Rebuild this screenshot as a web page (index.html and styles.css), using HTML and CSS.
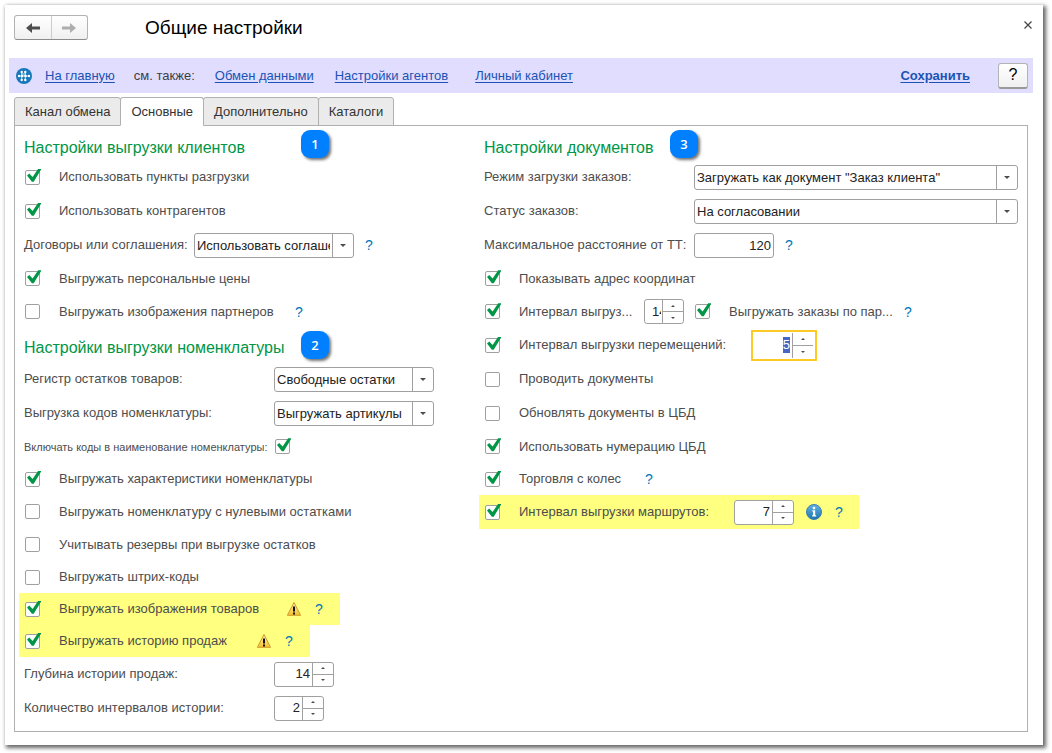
FILE: index.html
```html
<!DOCTYPE html>
<html lang="ru">
<head>
<meta charset="utf-8">
<title>Общие настройки</title>
<link rel="stylesheet" href="styles.css">
</head>
<body>
<svg class="sprite" aria-hidden="true">
  <defs>
    <linearGradient id="warn-fill" x1="0" y1="0" x2="0" y2="1"><stop offset="0" stop-color="#fff3a8"/><stop offset="1" stop-color="#f7c02f"/></linearGradient>
    <linearGradient id="info-fill" x1="0" y1="0" x2="0" y2="1"><stop offset="0" stop-color="#62b3e6"/><stop offset="1" stop-color="#1d74ad"/></linearGradient>
  </defs>
  <symbol id="warn" viewBox="0 0 16 16"><path d="M8 1.5 14.6 14.3H1.4Z" fill="url(#warn-fill)" stroke="#cf9a2c" stroke-width="1" stroke-linejoin="round"/><path d="M7 5.5h2v5H7zM7 11.5h2v2H7z" fill="#111"/></symbol>
</svg>
<main class="window">
  <header class="titlebar">
    <div class="history">
      <button class="history-btn" type="button" aria-label="Назад"><svg width="14" height="12" viewBox="0 0 14 12"><path d="M0 6 6 1v3.5h8v3H6V11Z" fill="#4d4d4d"/></svg></button>
      <button class="history-btn" type="button" aria-label="Вперед"><svg width="14" height="12" viewBox="0 0 14 12"><path d="M14 6 8 1v3.5H0v3h8V11Z" fill="#adadad"/></svg></button>
    </div>
    <h1 class="title">Общие настройки</h1>
    <button class="close" type="button" aria-label="Закрыть"><svg width="8" height="8" viewBox="0 0 8 8"><path d="M.5.5l7 7M7.5.5l-7 7" stroke="#444" stroke-width="1.2"/></svg></button>
  </header>

  <nav class="linkbar">
    <svg class="home" width="16" height="16" viewBox="0 0 16 16"><circle cx="8" cy="8" r="8" fill="#1878bb"/><path d="M5.7 4v8M9.3 4v8M3 8h10M5.7 6h3.6" stroke="#b9def2" stroke-width="1"/><g fill="#fff"><circle cx="5.7" cy="4" r="1.2"/><circle cx="9.3" cy="4" r="1.2"/><circle cx="3" cy="8" r="1.2"/><circle cx="6" cy="8" r="1.3"/><circle cx="9.5" cy="8" r="1.3"/><circle cx="13" cy="8" r="1.2"/><circle cx="5.7" cy="12" r="1.2"/><circle cx="9.3" cy="12" r="1.2"/></g></svg>
    <a class="link" href="#">На главную</a>
    <span class="see-also">см. также:</span>
    <a class="link link-exchange" href="#">Обмен данными</a>
    <a class="link link-agents" href="#">Настройки агентов</a>
    <a class="link" href="#">Личный кабинет</a>
    <a class="link save" href="#">Сохранить</a>
    <button class="help-btn" type="button">?</button>
  </nav>

  <div class="tabs" role="tablist">
    <button class="tab" type="button" role="tab">Канал обмена</button>
    <button class="tab tab-active" type="button" role="tab" aria-selected="true">Основные</button>
    <button class="tab" type="button" role="tab">Дополнительно</button>
    <button class="tab" type="button" role="tab">Каталоги</button>
  </div>

  <div class="panel">
    <div class="column">
      <h2 class="heading">Настройки выгрузки клиентов<span class="callout">1</span></h2>
      <div class="row"><input class="check" type="checkbox" id="points" checked><label for="points">Использовать пункты разгрузки</label></div>
      <div class="row"><input class="check" type="checkbox" id="contractors" checked><label for="contractors">Использовать контрагентов</label></div>
      <div class="row">
        <label class="label-contract" for="contract">Договоры или соглашения:</label>
        <span class="combo"><select id="contract"><option>Использовать соглашения</option></select></span>
        <button class="hint hint-near" type="button">?</button>
      </div>
      <div class="row row-mid"><input class="check" type="checkbox" id="prices" checked><label for="prices">Выгружать персональные цены</label></div>
      <div class="row row-mid"><input class="check" type="checkbox" id="partner-img"><label class="label-partner" for="partner-img">Выгружать изображения партнеров</label><button class="hint" type="button">?</button></div>

      <h2 class="heading heading-next">Настройки выгрузки номенклатуры<span class="callout">2</span></h2>
      <div class="row"><label class="label-wide" for="register">Регистр остатков товаров:</label><span class="combo"><select id="register"><option>Свободные остатки</option></select></span></div>
      <div class="row"><label class="label-wide" for="codes">Выгрузка кодов номенклатуры:</label><span class="combo"><select id="codes"><option>Выгружать артикулы</option></select></span></div>
      <div class="row row-mid"><label class="label-wide label-small" for="in-name">Включать коды в наименование номенклатуры:</label><input class="check" type="checkbox" id="in-name" checked></div>
      <div class="row row-low"><input class="check" type="checkbox" id="chars" checked><label for="chars">Выгружать характеристики номенклатуры</label></div>
      <div class="row row-mid"><input class="check" type="checkbox" id="zero"><label for="zero">Выгружать номенклатуру с нулевыми остатками</label></div>
      <div class="row row-mid"><input class="check" type="checkbox" id="reserve"><label for="reserve">Учитывать резервы при выгрузке остатков</label></div>
      <div class="row row-low"><input class="check" type="checkbox" id="barcode"><label for="barcode">Выгружать штрих-коды</label></div>
      <div class="row row-low marked marked-images"><input class="check" type="checkbox" id="goods-img" checked><label class="label-images" for="goods-img">Выгружать изображения товаров</label><svg class="sign" width="16" height="16"><use href="#warn"/></svg><button class="hint" type="button">?</button></div>
      <div class="row row-low marked marked-history"><input class="check" type="checkbox" id="history" checked><label class="label-history" for="history">Выгружать историю продаж</label><svg class="sign" width="16" height="16"><use href="#warn"/></svg><button class="hint" type="button">?</button></div>
      <div class="row"><label class="label-wide" for="depth">Глубина истории продаж:</label><span class="spin"><input type="text" inputmode="numeric" id="depth" value="14"><span class="steps"><button type="button" class="up" aria-label="Больше"></button><button type="button" class="down" aria-label="Меньше"></button></span></span></div>
      <div class="row"><label class="label-wide" for="count">Количество интервалов истории:</label><span class="spin spin-short"><input type="text" inputmode="numeric" id="count" value="2"><span class="steps"><button type="button" class="up" aria-label="Больше"></button><button type="button" class="down" aria-label="Меньше"></button></span></span></div>
    </div>

    <div class="column">
      <h2 class="heading">Настройки документов<span class="callout callout-docs">3</span></h2>
      <div class="row"><label class="label-doc" for="mode">Режим загрузки заказов:</label><span class="combo combo-fill"><select id="mode"><option>Загружать как документ "Заказ клиента"</option></select></span></div>
      <div class="row"><label class="label-doc" for="status">Статус заказов:</label><span class="combo combo-fill"><select id="status"><option>На согласовании</option></select></span></div>
      <div class="row"><label class="label-doc" for="distance">Максимальное расстояние от ТТ:</label><input class="number" type="text" inputmode="numeric" id="distance" value="120"><button class="hint hint-near" type="button">?</button></div>
      <div class="row row-mid"><input class="check" type="checkbox" id="address" checked><label for="address">Показывать адрес координат</label></div>
      <div class="row row-mid">
        <input class="check" type="checkbox" id="orders-on" checked><label class="label-orders" for="orders-on">Интервал выгруз...</label>
        <span class="spin spin-tiny"><input type="text" inputmode="numeric" aria-label="Интервал выгрузки заказов" value="14"><span class="steps"><button type="button" class="up" aria-label="Больше"></button><button type="button" class="down" aria-label="Меньше"></button></span></span>
        <input class="check check-second" type="checkbox" id="by-partner" checked><label class="label-by" for="by-partner">Выгружать заказы по пар...</label><button class="hint" type="button">?</button>
      </div>
      <div class="row"><input class="check" type="checkbox" id="moves-on" checked><label class="label-moves" for="moves-on">Интервал выгрузки перемещений:</label><span class="spin spin-focus"><input type="text" inputmode="numeric" id="moves" aria-label="Интервал выгрузки перемещений" value="5"><span class="steps"><button type="button" class="up" aria-label="Больше"></button><button type="button" class="down" aria-label="Меньше"></button></span></span></div>
      <div class="row"><input class="check" type="checkbox" id="post"><label for="post">Проводить документы</label></div>
      <div class="row"><input class="check" type="checkbox" id="update"><label for="update">Обновлять документы в ЦБД</label></div>
      <div class="row row-mid"><input class="check" type="checkbox" id="numbering" checked><label for="numbering">Использовать нумерацию ЦБД</label></div>
      <div class="row row-low"><input class="check" type="checkbox" id="wheels" checked><label class="label-wheels" for="wheels">Торговля с колес</label><button class="hint" type="button">?</button></div>
      <div class="row marked marked-routes"><input class="check" type="checkbox" id="routes-on" checked><label class="label-routes" for="routes-on">Интервал выгрузки маршрутов:</label><span class="spin"><input type="text" inputmode="numeric" aria-label="Интервал выгрузки маршрутов" value="7"><span class="steps"><button type="button" class="up" aria-label="Больше"></button><button type="button" class="down" aria-label="Меньше"></button></span></span><svg class="sign sign-info" width="16" height="16" viewBox="0 0 16 16"><circle cx="8" cy="8" r="7.5" fill="url(#info-fill)" stroke="#3a7fae"/><path d="M6.3 6.3H9.2V11.3h1v1.2H6.1v-1.2h1V7.5h-.8z" fill="#fff"/><circle cx="8" cy="4.1" r="1.3" fill="#fff"/></svg><button class="hint" type="button">?</button></div>
    </div>
  </div>
</main>
<script src="focus.js"></script>
</body>
</html>
```

FILE: styles.css
```css
* { box-sizing: border-box; }

body {
  margin: 0;
  min-height: 100vh;
  padding: 5px 9px 9px 5px;
  display: flex;
  background: #fff;
  color: #4d4d4d;
  font: 13px/16px "Liberation Sans", Arial, sans-serif;
}

button, input, select { font: inherit; color: inherit; margin: 0; }
button { padding: 0; border: 0; background: none; }
input, button, select { outline: none; }
.sprite { position: absolute; width: 0; height: 0; }

.window {
  flex: 1;
  min-width: 0;
  display: flex;
  flex-direction: column;
  background: #fff;
  box-shadow: 2px 2px 4px 1px rgba(0, 0, 0, .6);
}

.titlebar { display: flex; align-items: flex-start; height: 53px; padding: 10px 11px 0 9px; }
.history {
  display: flex;
  width: 74px;
  height: 25px;
  border: 1px solid #b3b3b3;
  border-bottom-color: #8c8c8c;
  border-radius: 3px;
  background: linear-gradient(#fff, #f0f0f0);
}
.history-btn { flex: 1; display: flex; align-items: center; justify-content: center; }
.history-btn + .history-btn { border-left: 1px solid #ccc; }
.title { margin: 1px 0 0 57px; font-size: 19px; line-height: 24px; font-weight: 400; color: #000; }
.close { margin-left: auto; width: 8px; height: 20px; display: flex; align-items: center; }

.linkbar {
  display: flex;
  align-items: center;
  height: 35px;
  margin: 0 10px 0 4px;
  padding: 0 5px 0 7px;
  background: #e1ddff;
}
.home { margin-right: 13px; }
.link { color: #1a53b5; text-decoration: underline; text-underline-offset: 2px; }
.see-also { margin: 0 20px 0 19px; color: #404040; }
.link-exchange { margin-right: 21px; }
.link-agents { margin-right: 27px; }
.save { margin-left: auto; margin-right: 28px; font-weight: 700; }
.help-btn {
  width: 30px;
  height: 26px;
  border: 1px solid #b3b3b3;
  border-bottom: 2px solid #999;
  border-radius: 3px;
  background: linear-gradient(#fff, #f0f0f0);
  color: #000;
  font-size: 16px;
}

.tabs { display: flex; margin: 4px 0 0 9px; height: 29px; position: relative; }
.tab {
  padding: 0 10px;
  height: 29px;
  border: 1px solid #b0b0b0;
  border-radius: 3px 3px 0 0;
  background: #ebebeb;
  color: #333;
}
.tab + .tab { margin-left: -1px; }
.tab.tab-active { background: #fff; border-bottom-color: #fff; }

.panel {
  flex: 1;
  display: grid;
  grid-template-columns: 460px minmax(0, 1fr);
  margin: -1px 15px 13px 9px;
  padding: 8px 9px 6px;
  border: 1px solid #b0b0b0;
}

.heading {
  position: relative;
  margin: 0;
  height: 26px;
  font-size: 16px;
  line-height: 28px;
  font-weight: 400;
  color: #009646;
}
.heading-next { height: 34px; line-height: 40px; }
.callout {
  position: absolute;
  left: 277px;
  top: -4px;
  width: 28px;
  height: 28px;
  border-radius: 9px;
  background: #0080ff;
  box-shadow: 2px 2px 3px rgba(0, 0, 0, .55);
  color: #fff;
  font: 600 13px/28px "Open Sans", sans-serif;
  text-align: center;
}
.heading-next .callout { top: 3px; }
.callout.callout-docs { left: 186px; }

.row { display: flex; align-items: center; height: 34px; white-space: nowrap; }
.row-mid { height: 33px; }
.row-low { height: 32px; }
.marked { margin-left: -5px; padding-left: 5px; background: #ffff80; }
.marked-images { width: 321px; }
.marked-history { width: 291px; }
.marked-routes { width: 380px; }

.label-contract { width: 170px; }
.label-partner { width: 236px; }
.label-wide { width: 250px; }
.label-small { font-size: 11px; }
.label-images { width: 227px; }
.label-history { width: 197px; }
.label-doc { width: 210px; flex: none; }
.label-orders { width: 125px; }
.label-by { width: 175px; }
.label-moves { width: 232px; }
.label-wheels { width: 126px; }
.label-routes { width: 215px; }

.check {
  appearance: none;
  position: relative;
  flex: none;
  width: 15px;
  height: 15px;
  margin: 0 19px 0 1px;
  border: 1px solid #a0a0a0;
  border-radius: 2px;
  background: #fff;
}
.check:checked::before {
  content: "";
  position: absolute;
  left: 1px;
  top: -2px;
  width: 14px;
  height: 14px;
  background: #009646;
  clip-path: polygon(0 50%, 16% 36%, 40% 60%, 80% 1%, 100% 1%, 100% 9%, 48% 94%, 35% 94%);
}
.check-second { margin-left: 11px; }

.combo { position: relative; width: 160px; height: 25px; }
.combo-fill { flex: 1; width: auto; }
.combo select {
  appearance: none;
  display: block;
  width: 100%;
  height: 25px;
  padding: 2px 23px 0 2px;
  border: 1px solid #a0a0a0;
  border-radius: 3px;
  background: linear-gradient(#a0a0a0, #a0a0a0) right 20px top / 1px 100% no-repeat #fff;
  color: #222;
}
.combo::after {
  content: "";
  position: absolute;
  right: 8px;
  top: 11px;
  border: 3px solid transparent;
  border-top-color: #4d4d4d;
  border-bottom: 0;
  pointer-events: none;
}

.number {
  width: 80px;
  height: 25px;
  padding: 0 2px;
  border: 1px solid #a0a0a0;
  border-radius: 3px;
  background: #fff;
  color: #222;
  text-align: right;
}

.spin {
  display: flex;
  width: 60px;
  height: 25px;
  border: 1px solid #a0a0a0;
  border-radius: 3px;
  background: #fff;
  overflow: hidden;
}
.spin input {
  flex: 1;
  min-width: 0;
  padding: 0 2px;
  border: 0;
  background: none;
  color: #222;
  text-align: right;
}
.steps { display: flex; flex-direction: column; width: 21px; border-left: 1px solid #a0a0a0; }
.steps button { flex: 1; display: flex; align-items: center; justify-content: center; }
.steps button + button { border-top: 1px solid #a0a0a0; }
.steps button::before { content: ""; border: 2px solid transparent; }
.steps .up::before { border-bottom-color: #4d4d4d; border-top: 0; }
.steps .down::before { border-top-color: #4d4d4d; border-bottom: 0; }
.spin-short { width: 50px; }
.spin-tiny { width: 40px; }
.spin.spin-tiny input { padding: 0 1px 0 7px; text-align: left; }
.spin-focus { width: 66px; height: 31px; padding: 1px 2px; border: 2px solid #fbca25; border-radius: 0; }
.spin-focus input::selection { background: #4a66c4; color: #fff; }

.hint { color: #0078b8; font-size: 14px; width: 8px; }
.hint-near { margin-left: 11px; }
.sign { margin-right: 13px; }
.sign-info { margin-left: 12px; }
```

FILE: focus.js
```js
const field = document.getElementById("moves");
field.focus();
field.select();
```
